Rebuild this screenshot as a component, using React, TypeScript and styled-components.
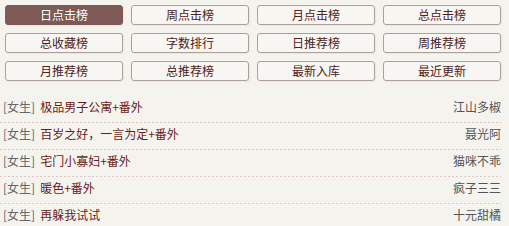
import React from 'react'
import styled, { createGlobalStyle } from 'styled-components'

const GlobalStyle = createGlobalStyle`
    html, body {
        margin: 0;
        padding: 0;
        background: #f5f3ee;
    }
    body {
        font-family: 'Noto Sans CJK SC', 'Noto Sans', sans-serif;
        font-size: 12px;
    }
`

const Wrapper = styled.div`
    width: 501px;
    padding-top: 5px;
`

const RankGrid = styled.div`
    display: grid;
    grid-template-columns: repeat(4, 118px);
    grid-auto-rows: 20px;
    column-gap: 8px;
    row-gap: 8px;
    padding-left: 5px;
`

const RankButton = styled.a<{ active?: boolean }>`
    display: flex;
    align-items: center;
    justify-content: center;
    box-sizing: border-box;
    border: 1px solid ${({ active }) => (active ? '#7d5a56' : '#ad9f9c')};
    border-radius: 3px;
    background: ${({ active }) => (active ? '#7d5a56' : '#f8f6f2')};
    color: ${({ active }) => (active ? '#ffffff' : '#4a2222')};
    font-size: 12px;
    line-height: 1;
    cursor: pointer;
    box-shadow: 1px 1px 1px rgb(0 0 0 / 5%);
`

const BookList = styled.ul`
    list-style: none;
    margin: 15px 0 0;
    padding: 0;
`

// fine dotted separator, 2px dash / 2px gap like the original
const BookRow = styled.li`
    display: flex;
    align-items: center;
    justify-content: space-between;
    height: 18px;
    padding: 2px 0 7px 3px;
    line-height: 18px;
    background-image: repeating-linear-gradient(
        to right,
        #dcc6c6 0 2px,
        transparent 2px 4px
    );
    background-size: 100% 1px;
    background-position: bottom left;
    background-repeat: no-repeat;

    &:last-child {
        background-image: none;
    }
`

const Category = styled.span`
    color: #666;
    margin-right: 5px;
`

const Title = styled.a`
    color: #6a1c1c;
`

const Author = styled.span`
    color: #555;
`

const ranks = [
    '日点击榜', '周点击榜', '月点击榜', '总点击榜',
    '总收藏榜', '字数排行', '日推荐榜', '周推荐榜',
    '月推荐榜', '总推荐榜', '最新入库', '最近更新',
]

const books = [
    { title: '极品男子公寓+番外', author: '江山多椒' },
    { title: '百岁之好，一言为定+番外', author: '聂光阿' },
    { title: '宅门小寡妇+番外', author: '猫咪不乖' },
    { title: '暖色+番外', author: '疯子三三' },
    { title: '再躲我试试', author: '十元甜橘' },
]

const App = () => (
    <>
        <GlobalStyle />
        <Wrapper>
            <RankGrid>
                {ranks.map((r, i) => (
                    <RankButton key={r} active={i === 0}>
                        {r}
                    </RankButton>
                ))}
            </RankGrid>
            <BookList>
                {books.map((b) => (
                    <BookRow key={b.title}>
                        <span>
                            <Category>[女生]</Category>
                            <Title>{b.title}</Title>
                        </span>
                        <Author>{b.author}</Author>
                    </BookRow>
                ))}
            </BookList>
        </Wrapper>
    </>
)

export default App
